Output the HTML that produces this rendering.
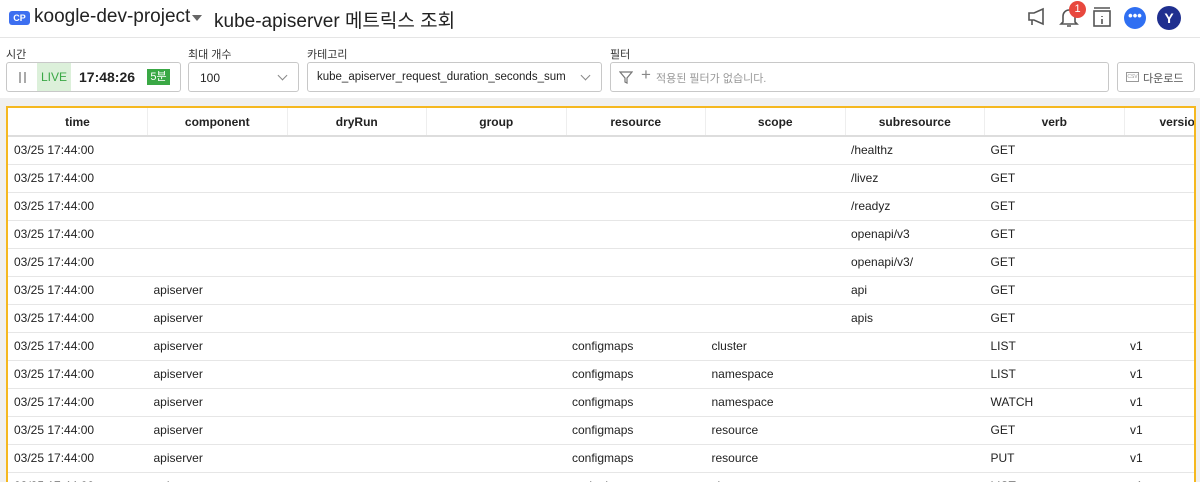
<!DOCTYPE html>
<html><head><meta charset="utf-8"><style>
*{box-sizing:border-box;margin:0;padding:0}
body{width:1200px;height:482px;overflow:hidden;background:#fff;font-family:"Liberation Sans","Noto Sans CJK KR",sans-serif;color:#222;position:relative}
.a{position:absolute}
.lbl{font-size:11px;color:#333;top:46px}
.box{border:1px solid #c8c8c8;border-radius:3px;top:62px;height:30px;background:#fff}
.chev{position:absolute;right:12px;top:9px;width:7px;height:7px;border-right:1px solid #888;border-bottom:1px solid #888;transform:rotate(45deg)}
table{border-collapse:collapse;table-layout:fixed;font-size:12px}
th{height:28px;font-weight:bold;text-align:center;border-right:1px solid #eee;border-bottom:2px solid #ddd;color:#222}
td{height:28px;padding-left:6px;border-bottom:1px solid #e6e6e6;white-space:nowrap;overflow:hidden;color:#222}
</style></head><body>
<div class="a" style="left:9px;top:11px;width:21px;height:14px;background:#3d6ff0;border-radius:3px;color:#fff;font-size:9px;font-weight:bold;text-align:center;line-height:14px">CP</div>
<div class="a" style="left:34px;top:6px;font-size:19px;color:#222">koogle-dev-project</div>
<div class="a" style="left:192px;top:15px;width:0;height:0;border-left:5px solid transparent;border-right:5px solid transparent;border-top:6px solid #666"></div>
<div class="a" style="left:214px;top:6px;font-size:19px;color:#222">kube-apiserver 메트릭스 조회</div>
<svg class="a" style="left:1026px;top:7px" width="22" height="20" viewBox="0 0 22 20" fill="none" stroke="#555" stroke-width="1.6"><path d="M3 6h5l9-4v15l-9-4H3z M6 13v5"/></svg>
<svg class="a" style="left:1058px;top:6px" width="22" height="22" viewBox="0 0 22 22" fill="none" stroke="#555" stroke-width="1.6"><path d="M5 16V10a6 6 0 0 1 12 0v6l2 2H3z M9 20h4"/></svg>
<div class="a" style="left:1069px;top:1px;width:17px;height:17px;border-radius:50%;background:#e8483e;color:#fff;font-size:11px;text-align:center;line-height:17px">1</div>
<svg class="a" style="left:1091px;top:6px" width="22" height="22" viewBox="0 0 22 22" fill="none" stroke="#555" stroke-width="1.6"><rect x="3" y="5" width="16" height="15"/><path d="M3 2h16M11 10v1M11 13v5"/></svg>
<div class="a" style="left:1124px;top:7px;width:22px;height:22px;border-radius:50%;background:#2f6ff2;color:#fff;font-size:13px;font-weight:bold;text-align:center;line-height:18px">•••</div>
<div class="a" style="left:1157px;top:6px;width:24px;height:24px;border-radius:50%;background:#1f2f8f;color:#fff;font-size:14px;font-weight:bold;text-align:center;line-height:24px">Y</div>
<div class="a" style="left:0;top:37px;width:1200px;height:1px;background:#e5e5e5"></div>

<div class="a lbl" style="left:6px">시간</div>
<div class="a lbl" style="left:188px">최대 개수</div>
<div class="a lbl" style="left:307px">카테고리</div>
<div class="a lbl" style="left:610px">필터</div>
<div class="a box" style="left:6px;width:175px;overflow:hidden">
 <div class="a" style="left:12px;top:9px;width:2px;height:11px;background:#aaa"></div><div class="a" style="left:17px;top:9px;width:2px;height:11px;background:#aaa"></div>
 <div class="a" style="left:30px;top:0;width:34px;height:28px;background:#dcf0da;color:#3aa845;font-size:12px;text-align:center;line-height:28px">LIVE</div>
 <div class="a" style="left:72px;top:6px;font-size:14px;font-weight:bold;color:#222">17:48:26</div>
 <div class="a" style="left:140px;top:6px;width:23px;height:16px;background:#3aa845;color:#fff;font-size:11px;text-align:center;line-height:16px">5분</div>
</div>
<div class="a box" style="left:188px;width:111px"><div class="a" style="left:11px;top:8px;font-size:12px">100</div><div class="chev"></div></div>
<div class="a box" style="left:307px;width:295px"><div class="a" style="left:9px;top:8px;font-size:11.5px">kube_apiserver_request_duration_seconds_sum</div><div class="chev"></div></div>
<div class="a box" style="left:610px;width:499px">
 <svg class="a" style="left:8px;top:7px" width="14" height="14" viewBox="0 0 14 14" fill="none" stroke="#777" stroke-width="1.2"><path d="M1 2h12L8 8v5L6 12V8z"/></svg>
 <div class="a" style="left:30px;top:2px;font-size:17px;color:#888">+</div>
 <div class="a" style="left:45px;top:7px;font-size:11px;color:#999">적용된 필터가 없습니다.</div>
</div>
<div class="a box" style="left:1117px;width:78px">
 <div class="a" style="left:8px;top:9px;width:13px;height:10px;border:1px solid #999;font-size:5px;color:#999;text-align:center;line-height:8px">CSV</div>
 <div class="a" style="left:25px;top:7px;font-size:11px;color:#555">다운로드</div>
</div>

<div class="a" style="left:0;top:98px;width:1200px;height:384px;background:#f0f0f0"></div>
<div class="a" style="left:6px;top:106px;width:1190px;height:376px;border:2px solid #f5b820;border-bottom:none;background:#fff;overflow:hidden">
<table style="width:1255px">
<colgroup><col style="width:139.5px"><col style="width:139.5px"><col style="width:139.5px"><col style="width:139.5px"><col style="width:139.5px"><col style="width:139.5px"><col style="width:139.5px"><col style="width:139.5px"><col style="width:139px"></colgroup>
<tr><th>time</th><th>component</th><th>dryRun</th><th>group</th><th>resource</th><th>scope</th><th>subresource</th><th>verb</th><th style="text-align:left;padding-left:35px">version</th></tr>
<tr><td>03/25 17:44:00</td><td></td><td></td><td></td><td></td><td></td><td>/healthz</td><td>GET</td><td></td></tr>
<tr><td>03/25 17:44:00</td><td></td><td></td><td></td><td></td><td></td><td>/livez</td><td>GET</td><td></td></tr>
<tr><td>03/25 17:44:00</td><td></td><td></td><td></td><td></td><td></td><td>/readyz</td><td>GET</td><td></td></tr>
<tr><td>03/25 17:44:00</td><td></td><td></td><td></td><td></td><td></td><td>openapi/v3</td><td>GET</td><td></td></tr>
<tr><td>03/25 17:44:00</td><td></td><td></td><td></td><td></td><td></td><td>openapi/v3/</td><td>GET</td><td></td></tr>
<tr><td>03/25 17:44:00</td><td>apiserver</td><td></td><td></td><td></td><td></td><td>api</td><td>GET</td><td></td></tr>
<tr><td>03/25 17:44:00</td><td>apiserver</td><td></td><td></td><td></td><td></td><td>apis</td><td>GET</td><td></td></tr>
<tr><td>03/25 17:44:00</td><td>apiserver</td><td></td><td></td><td>configmaps</td><td>cluster</td><td></td><td>LIST</td><td>v1</td></tr>
<tr><td>03/25 17:44:00</td><td>apiserver</td><td></td><td></td><td>configmaps</td><td>namespace</td><td></td><td>LIST</td><td>v1</td></tr>
<tr><td>03/25 17:44:00</td><td>apiserver</td><td></td><td></td><td>configmaps</td><td>namespace</td><td></td><td>WATCH</td><td>v1</td></tr>
<tr><td>03/25 17:44:00</td><td>apiserver</td><td></td><td></td><td>configmaps</td><td>resource</td><td></td><td>GET</td><td>v1</td></tr>
<tr><td>03/25 17:44:00</td><td>apiserver</td><td></td><td></td><td>configmaps</td><td>resource</td><td></td><td>PUT</td><td>v1</td></tr>
<tr><td>03/25 17:44:00</td><td>apiserver</td><td></td><td></td><td>endpoints</td><td>cluster</td><td></td><td>LIST</td><td>v1</td></tr>
</table>
</div>
</body></html>
